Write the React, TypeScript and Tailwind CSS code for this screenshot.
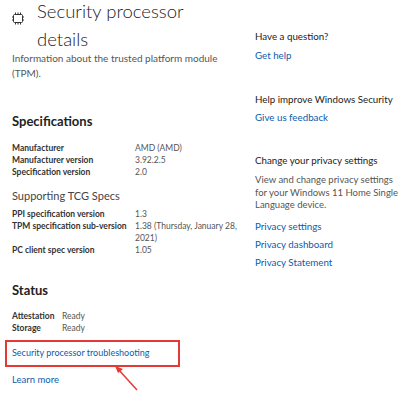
const font = { fontFamily: 'Lato, "Noto Sans", sans-serif' };

const ChipIcon = () => (
  <svg width="12" height="13" viewBox="0 0 12 13" fill="none" stroke="#333" strokeWidth="1">
    <rect x="1.5" y="2.5" width="9" height="8" rx="1" />
    <path d="M3.5 0.5v2M6 0.5v2M8.5 0.5v2M3.5 10.5v2M6 10.5v2M8.5 10.5v2M0 5h1.5M0 8h1.5M10.5 5h1.5M10.5 8h1.5" />
  </svg>
);

const Row = ({ label, value, w }: { label: string; value: string; w: string }) => (
  <div className="flex">
    <div className={`${w} shrink-0 font-bold text-[#333]`}>{label}</div>
    <div className="text-[#555]">{value}</div>
  </div>
);

const Link = ({ children, className = '' }: { children: React.ReactNode; className?: string }) => (
  <div className={`text-[#0b5cad] ${className}`}>{children}</div>
);

export default function App() {
  return (
    <div style={font} className="relative w-[400px] h-[400px] overflow-hidden bg-white flex text-[#1f1f1f]">
      <div className="w-[243px] shrink-0 pl-3">
        <div className="flex items-start -mt-[3px]">
          <div className="mt-[15px] w-[25px] shrink-0">
            <ChipIcon />
          </div>
          <h1 className="text-[18.5px] leading-[28px] font-light text-[#222]">
            Security processor
            <br />
            details
          </h1>
        </div>
        <p className="-mt-[2px] text-[10px] leading-[15px] text-[#555] pr-1">
          Information about the trusted platform module (TPM).
        </p>

        <h2 className="mt-[30px] text-[13px] leading-[20px] font-bold text-[#222]">Specifications</h2>
        <div className="mt-[11px] text-[8.5px] leading-[12px]">
          <Row label="Manufacturer" value="AMD (AMD)" w="w-[123px]" />
          <Row label="Manufacturer version" value="3.92.2.5" w="w-[123px]" />
          <Row label="Specification version" value="2.0" w="w-[123px]" />
        </div>
        <div className="mt-[10px] text-[11px] leading-[15px] text-[#444]">Supporting TCG Specs</div>
        <div className="mt-[5px] text-[8.5px] leading-[12px]">
          <Row label="PPI specification version" value="1.3" w="w-[123px]" />
          <Row label="TPM specification sub-version" value="1.38 (Thursday, January 28, 2021)" w="w-[123px]" />
          <Row label="PC client spec version" value="1.05" w="w-[123px]" />
        </div>

        <h2 className="mt-[24px] text-[13px] leading-[20px] font-bold text-[#222]">Status</h2>
        <div className="mt-[10px] text-[8.5px] leading-[12px]">
          <Row label="Attestation" value="Ready" w="w-[50px]" />
          <Row label="Storage" value="Ready" w="w-[50px]" />
        </div>
        <div className="mt-[6px] -ml-[7px] w-[175px] h-[27px] border-2 border-[#e53935] flex items-center pl-[5px] pb-[1px]">
          <Link className="text-[9px] leading-[14px]">Security processor troubleshooting</Link>
        </div>
        <Link className="mt-[6px] text-[9.5px] leading-[14px]">Learn more</Link>
      </div>

      <div className="flex-1 pl-3 pt-[29px] text-[9.75px] leading-[14px]">
        <div className="text-[#222]">Have a question?</div>
        <Link className="mt-[5px]">Get help</Link>
        <div className="mt-[30px] text-[#222]">Help improve Windows Security</div>
        <Link className="mt-[4px]">Give us feedback</Link>
        <div className="mt-[29px] text-[#222]">Change your privacy settings</div>
        <p className="mt-[7px] text-[9.5px] text-[#555] leading-[12.5px]">
          View and change privacy settings for your Windows 11 Home Single Language device.
        </p>
        <Link className="mt-[7px]">Privacy settings</Link>
        <Link className="mt-[4px]">Privacy dashboard</Link>
        <Link className="mt-[4px]">Privacy Statement</Link>
      </div>

      <svg className="absolute left-0 top-0 pointer-events-none" width="400" height="400">
        <line x1="137" y1="390" x2="118" y2="369" stroke="#e53935" strokeWidth="1.5" />
        <path d="M115 366 L123 369 L118 373 Z" fill="#e53935" />
      </svg>
    </div>
  );
}
